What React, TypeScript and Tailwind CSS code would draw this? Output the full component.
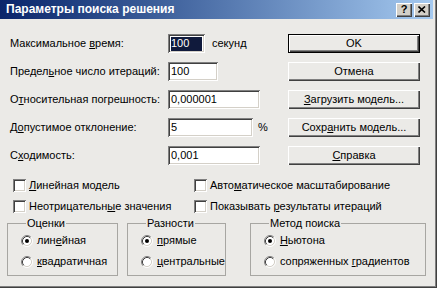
import type { ReactNode } from 'react';

const sunken =
  'shadow-[inset_1px_1px_0_#808080,inset_-1px_-1px_0_#ffffff,inset_2px_2px_0_#404040,inset_-2px_-2px_0_#d4d0c8]';
const raised =
  'shadow-[inset_1px_1px_0_#ffffff,inset_-1px_-1px_0_#404040,inset_-2px_-2px_0_#808080]';

type Row = {
  label: ReactNode;
  value: string;
  width: string;
  selected?: boolean;
  unit?: ReactNode;
  unitGap?: string;
  button: ReactNode;
  isDefault?: boolean;
};

const rows: Row[] = [
  {
    label: <>Максимальное <u>в</u>ремя:</>,
    value: '100',
    width: 'w-[37px]',
    selected: true,
    unit: 'секунд',
    unitGap: 'ml-[7px]',
    button: 'OK',
    isDefault: true,
  },
  {
    label: <>Предел<u>ь</u>ное число итераций:</>,
    value: '100',
    width: 'w-[50px]',
    button: 'Отмена',
  },
  {
    label: <>О<u>т</u>носительная погрешность:</>,
    value: '0,000001',
    width: 'w-[92px]',
    button: <><u>З</u>агрузить модель...</>,
  },
  {
    label: <>Д<u>о</u>пустимое отклонение:</>,
    value: '5',
    width: 'w-[85px]',
    unit: '%',
    unitGap: 'ml-[5px]',
    button: <>Сохр<u>а</u>нить модель...</>,
  },
  {
    label: <>С<u>х</u>одимость:</>,
    value: '0,001',
    width: 'w-[92px]',
    button: <><u>С</u>правка</>,
  },
];

function Checkbox({ children }: { children: ReactNode }) {
  return (
    <div className="flex items-center h-[21px]">
      <div className={`w-[13px] h-[13px] bg-white ${sunken}`} />
      <span className="ml-[3px] whitespace-nowrap">{children}</span>
    </div>
  );
}

function Radio({ checked, children }: { checked?: boolean; children: ReactNode }) {
  return (
    <div className="flex items-center h-[21px]">
      <svg width="12" height="12" viewBox="0 0 12 12" className="shrink-0">
        <circle cx="6" cy="6" r="4.5" fill="#ffffff" />
        <path d="M9.89 2.11 A5.5 5.5 0 0 0 2.11 9.89" fill="none" stroke="#808080" />
        <path d="M9.89 2.11 A5.5 5.5 0 0 1 2.11 9.89" fill="none" stroke="#ffffff" />
        <path d="M9.18 2.82 A4.5 4.5 0 0 0 2.82 9.18" fill="none" stroke="#404040" />
        <path d="M9.18 2.82 A4.5 4.5 0 0 1 2.82 9.18" fill="none" stroke="#d4d0c8" />
        {checked && <circle cx="6" cy="6" r="2" fill="#000000" />}
      </svg>
      <span className="ml-[4px] whitespace-nowrap">{children}</span>
    </div>
  );
}

function Group({ title, className, children }: { title: string; className: string; children: ReactNode }) {
  return (
    <fieldset className={`border border-[#a7a6a2] h-[59px] pl-[13px] ${className}`}>
      <legend className="ml-[5px] px-px leading-[13px]">{title}</legend>
      {children}
    </fieldset>
  );
}

export default function App() {
  return (
    <div className="relative w-[437px] h-[288px] overflow-hidden bg-[#ebeae7] text-[11px] leading-[13px] text-black font-['Liberation_Sans',Arial,sans-serif] shadow-[inset_-1px_-1px_0_#404040,inset_-2px_-2px_0_#808080]">
      {/* title bar */}
      <div className="flex items-center h-[19px] w-[433px] bg-gradient-to-r from-[#0a246a] to-[#a6caf0] pl-[6px] pr-[3px]">
        <span className="text-white font-bold text-[12px]">Параметры поиска решения</span>
        <div className="ml-auto flex gap-[2px]">
          <div className={`w-[16px] h-[14px] bg-[#d4d0c8] ${raised} flex items-center justify-center text-[11px] font-bold leading-none`}>
            ?
          </div>
          <div className={`w-[16px] h-[14px] bg-[#d4d0c8] ${raised} flex items-center justify-center`}>
            <svg width="8" height="7" viewBox="0 0 8 7">
              <path d="M0.5 0.5 L7 6.5 M7 0.5 L0.5 6.5" stroke="#000" strokeWidth="1.6" />
            </svg>
          </div>
        </div>
      </div>

      {/* fields and buttons */}
      <div className="pt-[15px] pl-[10px]">
        {rows.map((r, i) => (
          <div key={i} className="flex h-[28px]">
            <div className="flex w-[278px]">
              <div className="w-[158px] h-[19px] leading-[19px] whitespace-nowrap">{r.label}</div>
              <div className={`${r.width} h-[19px] bg-white ${sunken} flex items-center px-[3px]`}>
                {r.selected ? (
                  <span className="bg-[#101a3c] text-white h-[14px] flex-1 flex items-center">{r.value}</span>
                ) : (
                  <span>{r.value}</span>
                )}
              </div>
              {r.unit && <div className={`h-[19px] leading-[19px] ${r.unitGap}`}>{r.unit}</div>}
            </div>
            {r.isDefault ? (
              <div className="w-[132px] h-[19px] border border-black">
                <div className={`h-full leading-[17px] text-center ${raised}`}>{r.button}</div>
              </div>
            ) : (
              <div className={`w-[132px] h-[19px] leading-[19px] text-center whitespace-nowrap ${raised}`}>{r.button}</div>
            )}
          </div>
        ))}
      </div>

      {/* checkboxes */}
      <div className="flex pl-[13px] mt-px">
        <div className="w-[181px]">
          <Checkbox>
            <u>Л</u>инейная модель
          </Checkbox>
          <Checkbox>
            Неотрицательн<u>ы</u>е значения
          </Checkbox>
        </div>
        <div>
          <Checkbox>
            Авто<u>м</u>атическое масштабирование
          </Checkbox>
          <Checkbox>
            Показывать <u>р</u>езультаты итераций
          </Checkbox>
        </div>
      </div>

      {/* groups */}
      <div className="flex pl-[7px]">
        <Group title="Оценки" className="w-[111px]">
          <Radio checked>
            лин<u>е</u>йная
          </Radio>
          <Radio>
            <u>к</u>вадратичная
          </Radio>
        </Group>
        <Group title="Разности" className="w-[94px] ml-[9px]">
          <Radio checked>
            <u>п</u>рямые
          </Radio>
          <Radio>
            <u>ц</u>ентральные
          </Radio>
        </Group>
        <Group title="Метод поиска" className="w-[176px] ml-[24px]">
          <Radio checked>
            <u>Н</u>ьютона
          </Radio>
          <Radio>
            сопряженных <u>г</u>радиентов
          </Radio>
        </Group>
      </div>
    </div>
  );
}
